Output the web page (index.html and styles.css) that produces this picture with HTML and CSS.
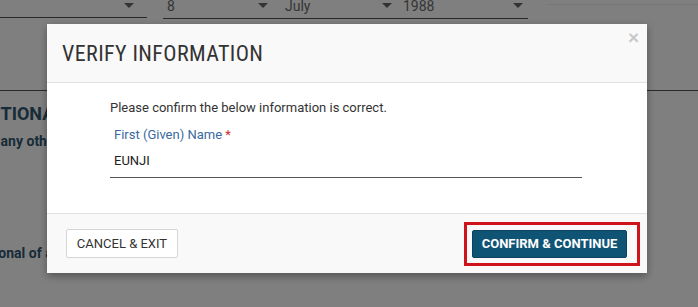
FILE: index.html
```html
<!DOCTYPE html>
<html lang="en">
<head>
<meta charset="utf-8">
<title>Verify Information</title>
<link rel="stylesheet" href="styles.css">
</head>
<body>
<div class="page">
  <div class="dob-row">
    <div class="field field-first">
      <span class="sel-text">&nbsp;</span><span class="caret"></span>
    </div>
    <div class="field-group">
      <div class="field field-day"><span class="sel-text">8</span><span class="caret"></span></div>
      <div class="field field-month"><span class="sel-text">July</span><span class="caret"></span></div>
      <div class="field field-year"><span class="sel-text">1988</span><span class="caret"></span></div>
    </div>
    <div class="side-band"></div>
  </div>
  <div class="divider"></div>
  <h2 class="section-title">ADDITIONAL INFORMATION</h2>
  <p class="question q1">Have you ever been known by any other names?</p>
  <p class="question q2">Are you a national of any other country?</p>
</div>

<div class="backdrop"></div>

<div class="modal" role="dialog" aria-labelledby="modal-title">
  <div class="modal-header">
    <h3 id="modal-title" class="modal-title">VERIFY INFORMATION</h3>
    <button class="close" aria-label="Close">&times;</button>
  </div>
  <div class="modal-body">
    <p class="intro">Please confirm the below information is correct.</p>
    <div class="form-field">
      <label class="field-label">First (Given) Name <span class="req">*</span></label>
      <div class="field-value">EUNJI</div>
    </div>
  </div>
  <div class="modal-footer">
    <button class="btn btn-cancel">CANCEL &amp; EXIT</button>
    <div class="highlight">
      <button class="btn btn-confirm">CONFIRM &amp; CONTINUE</button>
    </div>
  </div>
</div>
</body>
</html>
```

FILE: styles.css
```css
* { box-sizing: border-box; }

html, body {
  margin: 0;
  padding: 0;
  background: #ffffff;
  font-family: Roboto, "Liberation Sans", Arial, sans-serif;
  overflow: hidden;
}

.page {
  width: 698px;
  height: 307px;
}

/* background form row (partially scrolled off) */
.dob-row {
  display: flex;
  align-items: flex-start;
  margin-top: -7px;
}
.field {
  display: flex;
  align-items: center;
  justify-content: space-between;
  height: 25px;
  font-size: 14px;
  color: #6a6a6a;
}
.field-first {
  width: 147px;
  padding-right: 13px;
  border-bottom: 1px solid #505050;
}
.field-group {
  display: flex;
  margin-left: 16px;
  width: 365px;
  border-bottom: 1px solid #505050;
}
.field-day { width: 112px; padding-left: 4px; padding-right: 7px; }
.field-month { width: 122px; padding-left: 8px; padding-right: 7px; margin-left: 2px; }
.field-year { width: 129px; padding-left: 4px; padding-right: 5px; }
.caret {
  width: 0;
  height: 0;
  border-left: 5px solid transparent;
  border-right: 5px solid transparent;
  border-top: 5px solid #666;
}
.side-band {
  margin-left: 20px;
  flex: 1;
  height: 12px;
  background: #ffffff;
  border-bottom: 1px solid #ececec;
}

.divider {
  margin-top: 71px;
  width: 100%;
  height: 1px;
  background: #555;
}
.section-title {
  margin: 12px 0 0 -40px;
  font-size: 18px;
  font-weight: 700;
  color: #2f5870;
  white-space: nowrap;
  line-height: 22px;
}
.question {
  margin: 0;
  font-size: 14px;
  font-weight: 700;
  color: #2f5870;
  white-space: nowrap;
  line-height: 16px;
}
.q1 { margin-top: 8px; margin-left: -189px; }
.q2 { margin-top: 96px; margin-left: -88px; }

.backdrop {
  position: fixed;
  inset: 0;
  background: rgba(0, 0, 0, 0.5);
}

/* modal */
.modal {
  position: fixed;
  left: 47px;
  top: 24px;
  width: 600px;
  height: 249px;
  background: #ffffff;
  box-shadow: 0 3px 8px rgba(0, 0, 0, 0.35);
  display: flex;
  flex-direction: column;
}
.modal-header {
  position: relative;
  height: 59px;
  background: #f9f9f9;
  border-bottom: 1px solid #e2e2e2;
  display: flex;
  align-items: center;
  padding: 0 15px;
}
.modal-title {
  margin: 0;
  font-family: Roboto, "Liberation Sans", sans-serif;
  font-stretch: 85%;
  font-size: 22px;
  font-weight: 400;
  letter-spacing: 0.4px;
  color: #333333;
}
.close {
  position: absolute;
  right: 8px;
  top: 4px;
  border: 0;
  background: none;
  padding: 0;
  font-family: "Liberation Sans", Arial, sans-serif;
  font-size: 19px;
  font-weight: 700;
  line-height: 20px;
  color: #c9c9c9;
  cursor: pointer;
}

.modal-body {
  height: 130px;
  padding: 16px 65px 0 63px;
  background: #ffffff;
}
.intro {
  margin: 0;
  font-size: 13px;
  line-height: 18px;
  color: #333333;
}
.form-field {
  margin-top: 9px;
  border-bottom: 1px solid #555555;
}
.field-label {
  display: block;
  padding-left: 4px;
  font-size: 13px;
  line-height: 18px;
  color: #3a6aa0;
}
.req { color: #c9302c; }
.field-value {
  padding: 9px 0 8px 4px;
  font-size: 13px;
  line-height: 16px;
  color: #222222;
}

.modal-footer {
  flex: 1;
  background: #f9f9f9;
  border-top: 1px solid #e2e2e2;
  display: flex;
  align-items: center;
  justify-content: space-between;
  padding: 0 20px 0 19px;
}
.btn {
  font-family: Roboto, "Liberation Sans", sans-serif;
  font-size: 13px;
  border-radius: 2px;
  cursor: pointer;
}
.btn-cancel {
  width: 112px;
  height: 29px;
  padding: 0;
  background: #ffffff;
  border: 1px solid #d6d6d6;
  color: #333333;
}
.highlight {
  position: relative;
}
.highlight::before {
  content: "";
  position: absolute;
  left: -8px;
  top: -8px;
  right: -13px;
  bottom: -8px;
  border: 3px solid #d0131b;
  pointer-events: none;
}
.btn-confirm {
  width: 155px;
  height: 28px;
  padding: 0;
  background: #0f5475;
  border: 1px solid #0b4360;
  color: #ffffff;
  font-size: 13px;
  font-weight: 700;
}
```
